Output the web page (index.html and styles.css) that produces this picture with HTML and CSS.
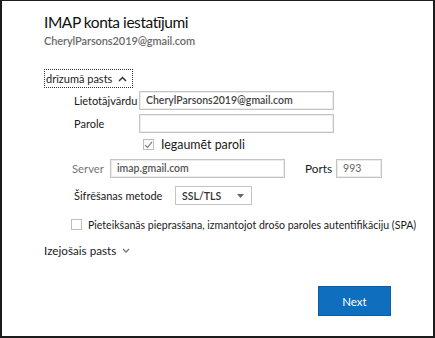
FILE: index.html
```html
<!DOCTYPE html>
<html lang="lv">
<head>
<meta charset="utf-8">
<link rel="stylesheet" href="styles.css">
</head>
<body>
<div class="dialog">
  <h1 class="title">IMAP konta iestatījumi</h1>
  <div class="account">CherylParsons2019@gmail.com</div>

  <div class="section-toggle open">
    <span class="tg-text">drīzumā pasts</span>
    <svg class="chev" width="9" height="6" viewBox="0 0 9 6"><path d="M1 5 L4.5 1.5 L8 5" fill="none" stroke="#333" stroke-width="1.5"/></svg>
  </div>

  <div class="fields">
    <div class="row">
      <label class="lbl lbl-user">Lietotājvārdu</label>
      <div class="input w-user">CherylParsons2019@gmail.com</div>
    </div>
    <div class="row">
      <label class="lbl lbl-user">Parole</label>
      <div class="input w-user"></div>
    </div>
    <div class="row remember">
      <span class="check checked">
        <svg width="9" height="8" viewBox="0 0 9 8"><path d="M1 4 L3.5 6.5 L8 1" fill="none" stroke="#8a8a8a" stroke-width="1.2"/></svg>
      </span>
      <span class="remember-text">Iegaumēt paroli</span>
    </div>
    <div class="row server-row">
      <label class="lbl lbl-server gray">Server</label>
      <div class="input w-server gray-text">imap.gmail.com</div>
      <label class="lbl-port">Ports</label>
      <div class="input w-port gray-text light">993</div>
    </div>
    <div class="row enc-row">
      <label class="lbl lbl-enc">Šifrēšanas metode</label>
      <div class="select">
        <span>SSL/TLS</span>
        <svg width="7" height="4" viewBox="0 0 7 4"><path d="M0 0 H7 L3.5 4 Z" fill="#666"/></svg>
      </div>
    </div>
    <div class="row spa">
      <span class="check"></span>
      <span class="spa-text">Pieteikšanās pieprasšana, izmantojot drošo paroles autentifikāciju (SPA)</span>
    </div>
  </div>

  <div class="section-toggle closed">
    <span>Izejošais pasts</span>
    <svg class="chev" width="8" height="5" viewBox="0 0 8 5"><path d="M1 1 L4 4 L7 1" fill="none" stroke="#777" stroke-width="1.3"/></svg>
  </div>

  <div class="actions">
    <button class="next">Next</button>
  </div>
</div>
</body>
</html>
```
FILE: styles.css
```css
* { box-sizing: border-box; }
html, body { margin: 0; padding: 0; background: #fff; }
body {
  font-family: Lato, "Open Sans", sans-serif;
  color: #1a1a1a;
}
.dialog {
  width: 435px;
  height: 338px;
  border: 2px solid #1c1c1c;
  border-top-width: 1px;
  padding: 10px 0 0 42px;
}
.title {
  margin: 0;
  font-size: 15.5px;
  font-weight: 400;
  line-height: 22px;
  letter-spacing: -0.45px;
  color: #111;
}
.account {
  margin-top: 0;
  height: 16px;
  font-size: 11px;
  font-weight: 600;
  letter-spacing: -0.1px;
  color: #6b6b6b;
  line-height: 16px;
}
.section-toggle {
  display: flex;
  align-items: center;
  font-size: 11px;
}
.section-toggle.open {
  margin-top: 20px;
  width: 89px;
  height: 19px;
  border: 1px dotted #333;
  padding-left: 1px;
  white-space: nowrap;
}
.section-toggle.open .chev { margin-left: auto; margin-right: 5px; }
.section-toggle.closed {
  margin-top: 10px;
  height: 16px;
  font-size: 11.7px;
}
.section-toggle.closed .chev { margin-left: 6px; }

.fields { padding-left: 30px; }
.row {
  display: flex;
  align-items: center;
  height: 19px;
  font-size: 11px;
  white-space: nowrap;
}
.row:first-child { margin-top: 3px; }
.row + .row { margin-top: 4px; }
.lbl { flex: none; }
.lbl-user { width: 65px; }
.lbl-server { width: 38px; margin-left: -2px; font-size: 11.3px; }
.lbl-enc { width: 101px; }
.gray { color: #777; }
.input {
  height: 19px;
  border: 1px solid #c4c4c4;
  box-shadow: inset 0 0 0 1px #ececec;
  padding: 0 6px;
  line-height: 17px;
  font-size: 10.5px;
  font-weight: 600;
  color: #444;
  overflow: hidden;
}
.w-user { width: 195px; }
.w-server { width: 175px; }
.w-port { width: 46px; margin-left: 4px; }
.gray-text { color: #555; }
.light { font-weight: 400; color: #666; }
.lbl-port { margin-left: 20px; font-size: 11.8px; }
.remember { padding-left: 69px; height: 15px; }
.check {
  width: 11px;
  height: 11px;
  border: 1px solid #bdbdbd;
  display: inline-flex;
  align-items: center;
  justify-content: center;
}
.remember-text { margin-left: 7px; font-size: 12.4px; }
.row.server-row { margin-top: 7px; }
.row.enc-row { margin-top: 8px; }
.select {
  margin-left: 0;
  width: 77px;
  height: 19px;
  border: 1px solid #c4c4c4;
  display: flex;
  align-items: center;
  justify-content: space-between;
  padding: 0 7px 0 6px;
  font-size: 10.5px;
  font-weight: 600;
  color: #333;
}
.row.spa { margin-top: 12px; height: 15px; margin-left: -3px; }
.spa-text { margin-left: 6px; font-size: 10.55px; color: #1a1a1a; }
.actions {
  display: flex;
  justify-content: flex-end;
  padding-right: 42px;
  margin-top: 28px;
}
.next {
  width: 73px;
  height: 30px;
  background: #106ebe;
  border: 1px solid #0a5ea8;
  color: #fff;
  font-family: inherit;
  font-size: 11.5px;
}
```
